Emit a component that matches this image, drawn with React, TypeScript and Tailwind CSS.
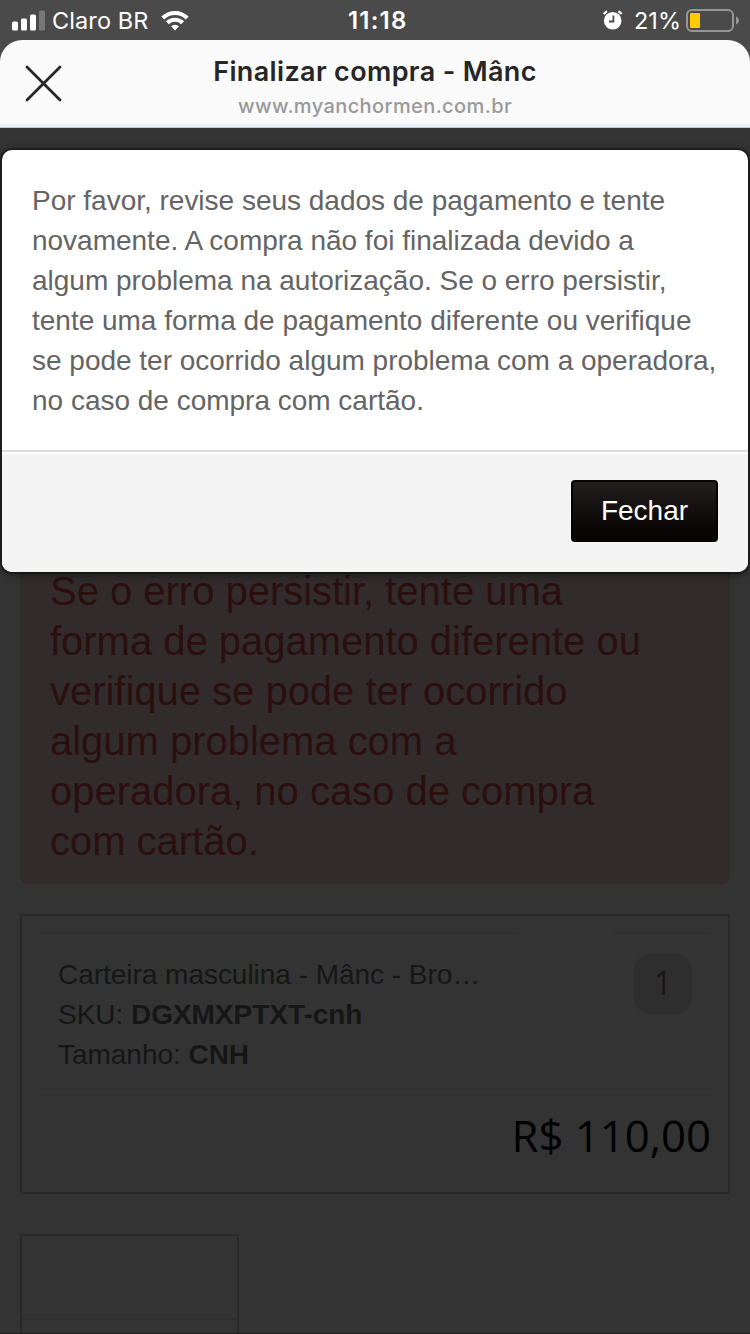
const errorLines = [
    'Se o erro persistir, tente uma',
    'forma de pagamento diferente ou',
    'verifique se pode ter ocorrido',
    'algum problema com a',
    'operadora, no caso de compra',
    'com cartão.',
];

const modalLines = [
    'Por favor, revise seus dados de pagamento e tente',
    'novamente. A compra não foi finalizada devido a',
    'algum problema na autorização. Se o erro persistir,',
    'tente uma forma de pagamento diferente ou verifique',
    'se pode ter ocorrido algum problema com a operadora,',
    'no caso de compra com cartão.',
];

const StatusBar = () => (
    <div className="flex h-10 items-center whitespace-nowrap font-['Inter',sans-serif] text-white">
        <svg className="ml-3 h-[21px] w-[33px]" viewBox="0 0 33 21" fill="currentColor">
            <rect x="0" y="11.5" width="6" height="9" rx="1.5" />
            <rect x="9" y="8.5" width="6" height="12" rx="1.5" />
            <rect x="18" y="4.5" width="6" height="16" rx="1.5" />
            <rect x="27" y="0.5" width="6" height="20" rx="1.5" opacity="0.25" />
        </svg>
        <span className="ml-[7px] w-[108px] pt-[2px] text-[23.5px] leading-10 tracking-[0.1px]">Claro BR</span>
        <svg className="h-[22px] w-[30px]" viewBox="0 0 30 22" fill="none" stroke="currentColor" strokeWidth="4.2">
            <path d="M2.8 9a17.400 17.400 0 0 1 24.400 0" />
            <path d="M7.400 13.800a11 11 0 0 1 15.200 0" />
            <path d="M15 21.500l-4-4.200a6 6 0 0 1 8 0z" fill="currentColor" stroke="none" />
        </svg>
        <span className="ml-[158px] w-[60px] pt-[2px] text-[24px] font-semibold leading-10 tracking-[1.2px]">11:18</span>
        <svg className="ml-[195px] h-[20px] w-[20px]" viewBox="0 0 20 20" fill="none">
            <circle cx="9.7" cy="10.7" r="8.8" fill="white" />
            <path d="M0.800 4.2a9 9 0 0 1 3.2-3M18.600 4.2a9 9 0 0 0-3.2-3" stroke="white" strokeWidth="2.2" />
            <path d="M10.4 5.5v6H6" stroke="#4a4a4a" strokeWidth="1.8" />
        </svg>
        <span className="ml-[11px] w-[52px] pt-[2px] text-[23.5px] leading-10">21%</span>
        <svg className="h-[23px] w-[54px]" viewBox="0 0 54 23" fill="none">
            <rect x="1" y="1" width="46" height="21" rx="5" stroke="#969696" strokeWidth="2" />
            <rect x="4" y="4" width="10" height="15" rx="1" fill="#ffcc00" />
            <path d="M50 7.500c4 1.500 4 6.500 0 8z" fill="#969696" />
        </svg>
    </div>
);

const Header = () => (
    <div className="relative flex h-[88px] flex-col items-center rounded-t-[22px] border-b border-[#c4ccd2] bg-[#fafafa] font-['Inter',sans-serif] shadow-[inset_0_-3px_0_#e8f0f8]">
        <svg className="absolute left-[25px] top-[25px] h-[37px] w-[37px]" viewBox="0 0 37 37" fill="none" stroke="#262626" strokeWidth="2.8" strokeLinecap="round">
            <path d="M2 2l33 33M35 2L2 35" />
        </svg>
        <h1 className="mt-[14px] whitespace-nowrap text-[27px] font-semibold leading-9 tracking-[0.35px] text-[#262626]">Finalizar compra - Mânc</h1>
        <p className="mt-[2px] whitespace-nowrap text-[20px] font-medium leading-7 tracking-[0.4px] text-[#999]">www.myanchormen.com.br</p>
    </div>
);

const Modal = () => (
    <div className="absolute left-[2px] top-[150px] w-[746px] rounded-[10px] bg-white shadow-[0_2px_10px_rgba(0,0,0,0.5),0_0_0_2px_rgba(0,0,0,0.3)]">
        <div className="h-[300px] whitespace-nowrap pl-[30px] pt-[31px] text-[28px] leading-10 tracking-[-0.01px] text-[#646464]">
            {modalLines.map((line) => (
                <p key={line}>{line}</p>
            ))}
        </div>
        <div className="flex h-[122px] justify-end rounded-b-[10px] border-t-2 border-[#ddd] bg-[#f4f4f4] pr-[30px] pt-7 shadow-[inset_0_2px_0_#fff]">
            <button className="h-[62px] w-[147px] rounded-[4px] border-2 border-[#050303] bg-linear-to-b from-[#231f1e] to-[#050303] text-[28px] text-white">
                Fechar
            </button>
        </div>
    </div>
);

export default function App() {
    return (
        <div className="relative h-[1334px] w-[750px] overflow-hidden bg-[#4a4a4a] font-['Liberation_Sans',Arial,sans-serif]">
            <StatusBar />
            <Header />

            {/* Checkout page, dimmed by the backdrop */}
            <main className="h-[1206px] bg-[#333] px-5 pt-[100px]">
                <div className="h-[656px] whitespace-nowrap rounded-[8px] bg-[#312b2b] pl-[30px] pt-[338px] text-[40px] leading-[50px] tracking-[-0.02px] text-[#2b0f0f]">
                    {errorLines.map((line) => (
                        <p key={line}>{line}</p>
                    ))}
                </div>

                <section className="mt-[30px] h-[280px] border-2 border-[#292929] px-[17px] pt-4">
                    <div className="flex h-[2px] justify-between">
                        <div className="w-[480px] bg-[#303030]"></div>
                        <div className="w-[98px] bg-[#303030]"></div>
                    </div>
                    <div className="flex h-[160px] justify-between whitespace-nowrap pl-[19px] pr-[19px] pt-5 text-[28px] leading-10 text-[#161616]">
                        <div className="pt-px tracking-[-0.03px]">
                            <p>Carteira masculina - Mânc - Bro…</p>
                            <p>SKU: <b>DGXMXPTXT-cnh</b></p>
                            <p>Tamanho: <b>CNH</b></p>
                        </div>
                        <div className="h-[60px] w-[58px] rounded-2xl bg-[#2e2e2e] text-center font-['Open_Sans',sans-serif] text-[32px] leading-[58px]">1</div>
                    </div>
                    <div className="h-[2px] bg-[#303030]"></div>
                    <p className="pt-[9px] text-right font-['Open_Sans',sans-serif] text-[43.7px] leading-[60px] text-black">R$ 110,00</p>
                </section>

                <div className="mt-10 h-[100px] w-[219px] border-2 border-b-0 border-[#292929] pt-[82px]">
                    <div className="h-[2px] bg-[#2f2f2f]"></div>
                </div>
            </main>

            <div className="absolute bottom-0 left-0 h-px w-full bg-[#211a1e]"></div>
            <Modal />
        </div>
    );
}
